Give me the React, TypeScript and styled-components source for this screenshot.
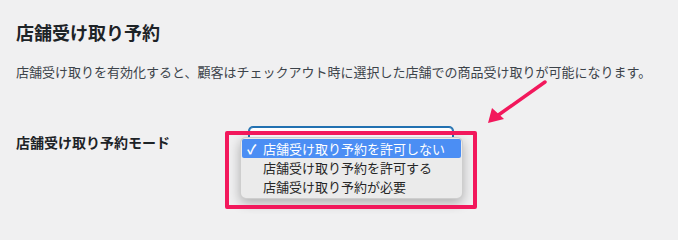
import React from 'react'
import styled, { createGlobalStyle } from 'styled-components'

const GlobalStyle = createGlobalStyle`
  html, body {
    margin: 0;
    padding: 0;
    background: #f0f0f1;
  }
  body {
    font-family: 'Noto Sans CJK JP', 'Noto Sans', sans-serif;
    color: #1d2327;
  }
`

const options = [
  '店舗受け取り予約を許可しない',
  '店舗受け取り予約を許可する',
  '店舗受け取り予約が必要',
]

const accent = '#f2185c'

const App: React.FC = () => {
  return (
    <>
      <GlobalStyle />
      <Page>
        <Title>店舗受け取り予約</Title>
        <Description>
          店舗受け取りを有効化すると、顧客はチェックアウト時に選択した店舗での商品受け取りが可能になります。
        </Description>
        <FieldRow>
          <Label>店舗受け取り予約モード</Label>
          <SelectWrap>
            <SelectBox />
            <Menu>
              {options.map((text, i) => (
                <MenuItem key={text} selected={i === 0}>
                  <Check>{i === 0 ? '✓' : ''}</Check>
                  {text}
                </MenuItem>
              ))}
            </Menu>
            <Highlight />
          </SelectWrap>
        </FieldRow>
        <Arrow viewBox="0 0 70 50" width={70} height={50}>
          <line
            x1={65}
            y1={6}
            x2={17}
            y2={40}
            stroke={accent}
            strokeWidth={3.5}
            strokeLinecap="round"
          />
          <polygon points="8,47 12,32 24,43" fill={accent} />
        </Arrow>
      </Page>
    </>
  )
}

const Page = styled.div`
  position: relative;
  width: 678px;
  height: 214px;
  box-sizing: border-box;
  padding: 20px 16px 0 16px;
  overflow: hidden;
`

const Title = styled.h2`
  margin: 0;
  font-size: 18px;
  line-height: 24px;
  font-weight: 700;
  color: #1d2327;
`

const Description = styled.p`
  margin: 18px 0 0 0;
  font-size: 13px;
  line-height: 20px;
  color: #3c434a;
`

const FieldRow = styled.div`
  display: flex;
  align-items: center;
  margin-top: 45px;
`

const Label = styled.div`
  width: 233px;
  flex-shrink: 0;
  font-size: 14px;
  line-height: 20px;
  font-weight: 700;
  color: #1d2327;
`

const SelectWrap = styled.div`
  position: relative;
  width: 204px;
  height: 30px;
`

const SelectBox = styled.div`
  box-sizing: border-box;
  width: 100%;
  height: 100%;
  background: #fff;
  border: 1px solid #2271b1;
  border-radius: 4px;
  box-shadow: 0 0 0 1px #2271b1;
`

const Menu = styled.div`
  position: absolute;
  left: -9px;
  top: 10px;
  width: 223px;
  box-sizing: border-box;
  padding: 1px 0 2px 0;
  background: #ebebeb;
  border: 1px solid rgba(0, 0, 0, 0.12);
  border-radius: 6px;
  box-shadow: 0 4px 12px rgba(0, 0, 0, 0.28);
  z-index: 2;
`

const MenuItem = styled.div<{ selected?: boolean }>`
  display: flex;
  align-items: center;
  height: 19px;
  margin: 0 1px;
  font-size: 13px;
  line-height: 19px;
  color: ${({ selected }) => (selected ? '#fff' : '#262626')};
  background: ${({ selected }) => (selected ? '#4b8ef4' : 'transparent')};
  border-radius: 2px;
`

const Check = styled.span`
  width: 21px;
  padding-left: 5px;
  box-sizing: border-box;
  font-size: 13px;
  font-weight: 700;
`

const Highlight = styled.div`
  position: absolute;
  left: -24px;
  top: 4px;
  width: 252px;
  height: 78px;
  box-sizing: border-box;
  border: 4px solid ${accent};
  border-radius: 2px;
  z-index: 3;
`

const Arrow = styled.svg`
  position: absolute;
  left: 480px;
  top: 76px;
`

export default App
